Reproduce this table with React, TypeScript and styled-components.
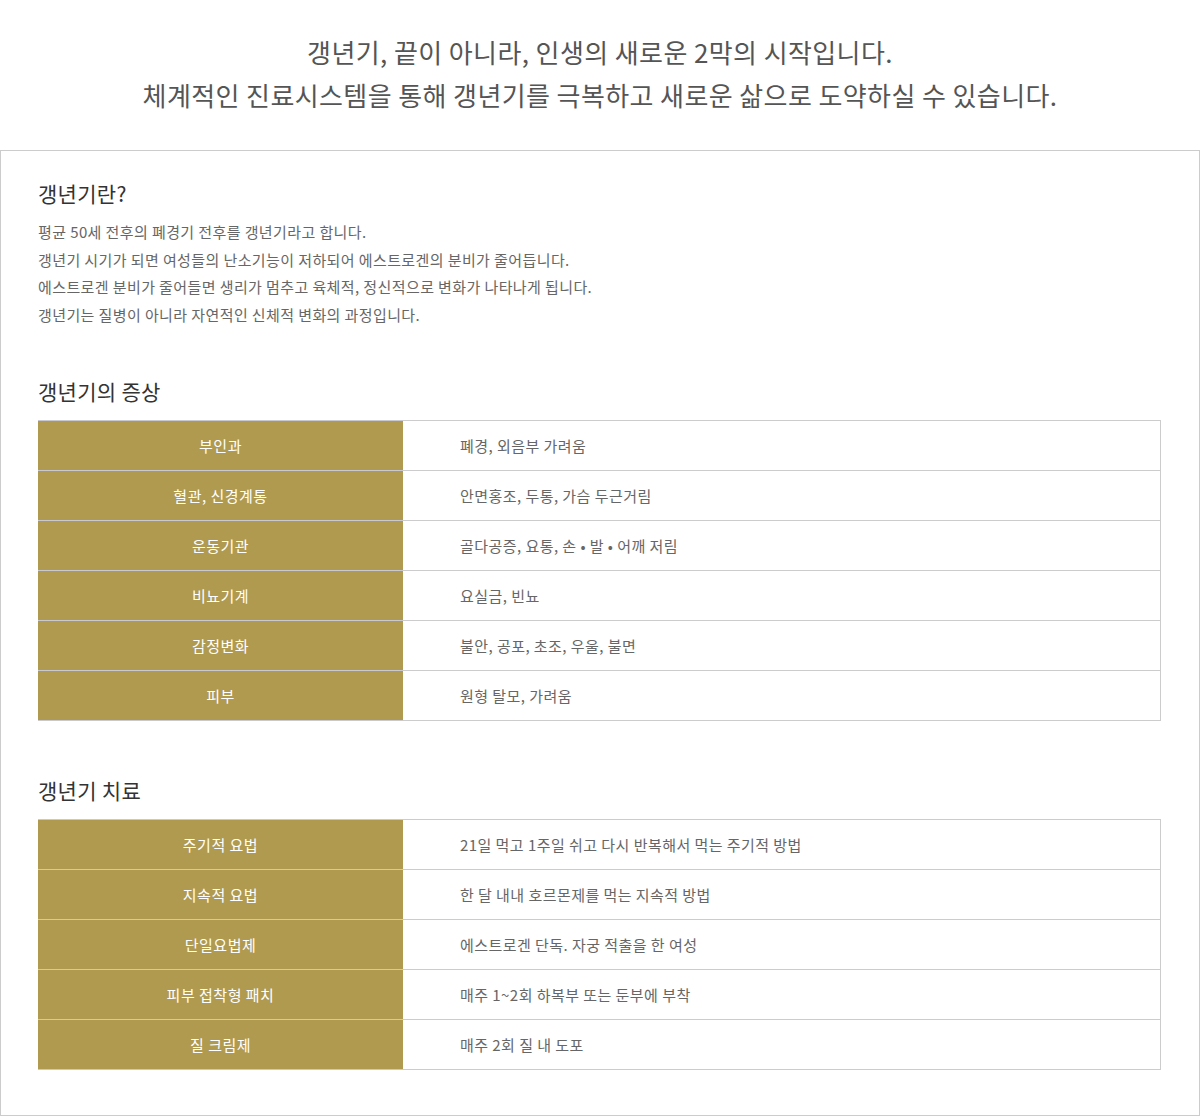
import React from "react"
import styled, { createGlobalStyle } from "styled-components"

const GlobalStyle = createGlobalStyle`
    * {
        box-sizing: border-box;
    }

    body {
        margin: 0;
        background: #ffffff;
        font-family: "Noto Sans CJK KR", "Noto Sans", sans-serif;
    }
`

const Page = styled.div`
    width: 1200px;
`

const Intro = styled.div`
    padding: 30px 0 34px;
    text-align: center;

    p {
        margin: 0;
        font-size: 26px;
        line-height: 43px;
        color: #555555;
        letter-spacing: 0.4px;
    }
`

const Box = styled.div`
    border: 1px solid #cccccc;
    padding: 27px 38px 45px 37px;
`

const SectionTitle = styled.h3<{ $top?: number }>`
    margin: ${props => props.$top ?? 0}px 0 0;
    font-size: 21px;
    font-weight: 400;
    line-height: 30px;
    color: #333333;
    letter-spacing: 0.3px;
`

const Description = styled.div`
    margin-top: 10px;

    p {
        margin: 0;
        font-size: 15px;
        line-height: 27.7px;
        color: #666666;
        letter-spacing: 0.4px;
    }
`

const InfoTable = styled.table`
    width: 100%;
    margin-top: 14px;
    border-collapse: collapse;
    table-layout: fixed;
`

const LabelCell = styled.th`
    width: 365px;
    height: 50px;
    padding: 0;
    background: #b09a50;
    border-top: 1px solid #c8c8d0;
    border-bottom: 1px solid #c8c8d0;
    color: #ffffff;
    font-size: 15px;
    font-weight: 400;
    text-align: center;
    letter-spacing: 0.5px;
`

const ValueCell = styled.td`
    height: 50px;
    padding: 0 0 0 57px;
    border: 1px solid #cccccc;
    border-left: none;
    color: #666666;
    font-size: 15px;
    letter-spacing: 0.45px;
`

const symptoms = [
    ["부인과", "폐경, 외음부 가려움"],
    ["혈관, 신경계통", "안면홍조, 두통, 가슴 두근거림"],
    ["운동기관", "골다공증, 요통, 손 • 발 • 어깨 저림"],
    ["비뇨기계", "요실금, 빈뇨"],
    ["감정변화", "불안, 공포, 초조, 우울, 불면"],
    ["피부", "원형 탈모, 가려움"],
]

const treatments = [
    ["주기적 요법", "21일 먹고 1주일 쉬고 다시 반복해서 먹는 주기적 방법"],
    ["지속적 요법", "한 달 내내 호르몬제를 먹는 지속적 방법"],
    ["단일요법제", "에스트로겐 단독. 자궁 적출을 한 여성"],
    ["피부 접착형 패치", "매주 1~2회 하복부 또는 둔부에 부착"],
    ["질 크림제", "매주 2회 질 내 도포"],
]

const Table = ({ rows }: { rows: string[][] }) => (
    <InfoTable>
        <tbody>
            {rows.map(([label, value]) => (
                <tr key={label}>
                    <LabelCell>{label}</LabelCell>
                    <ValueCell>{value}</ValueCell>
                </tr>
            ))}
        </tbody>
    </InfoTable>
)

export default function App() {
    return (
        <Page>
            <GlobalStyle />
            <Intro>
                <p>갱년기, 끝이 아니라, 인생의 새로운 2막의 시작입니다.</p>
                <p>체계적인 진료시스템을 통해 갱년기를 극복하고 새로운 삶으로 도약하실 수 있습니다.</p>
            </Intro>

            <Box>
                <SectionTitle>갱년기란?</SectionTitle>
                <Description>
                    <p>평균 50세 전후의 폐경기 전후를 갱년기라고 합니다.</p>
                    <p>갱년기 시기가 되면 여성들의 난소기능이 저하되어 에스트로겐의 분비가 줄어듭니다.</p>
                    <p>에스트로겐 분비가 줄어들면 생리가 멈추고 육체적, 정신적으로 변화가 나타나게 됩니다.</p>
                    <p>갱년기는 질병이 아니라 자연적인 신체적 변화의 과정입니다.</p>
                </Description>

                <SectionTitle $top={47}>갱년기의 증상</SectionTitle>
                <Table rows={symptoms} />

                <SectionTitle $top={54}>갱년기 치료</SectionTitle>
                <Table rows={treatments} />
            </Box>
        </Page>
    )
}
